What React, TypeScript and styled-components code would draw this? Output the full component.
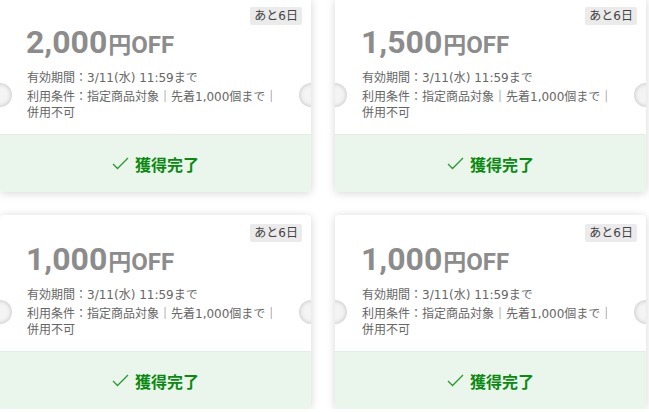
import React from "react";
import styled, { createGlobalStyle } from "styled-components";

const Global = createGlobalStyle`
  html, body { margin: 0; padding: 0; background: #ffffff; }
  body { font-family: Roboto, "Noto Sans CJK JP", sans-serif; overflow: hidden; }
`;

const Grid = styled.div`
  display: grid;
  grid-template-columns: 311px 311px;
  column-gap: 24px;
  row-gap: 23px;
  margin-top: -2px;
`;

const Card = styled.div`
  position: relative;
  height: 194px;
  background: #fff;
  border-radius: 4px;
  box-shadow: 0 1px 8px rgba(0, 0, 0, 0.17);
  display: flex;
  flex-direction: column;
  overflow: hidden;
`;

const Notch = styled.span<{ $side: "left" | "right" }>`
  position: absolute;
  top: 50%;
  ${(p) => (p.$side === "left" ? "left: -12px;" : "right: -12px;")}
  width: 24px;
  height: 24px;
  margin-top: -12px;
  border-radius: 50%;
  background: #f4f4f4;
  box-shadow: inset 0 0 5px rgba(0, 0, 0, 0.22);
`;

const Badge = styled.span`
  position: absolute;
  top: 9px;
  right: 9px;
  padding: 1px 4px;
  background: #ebebeb;
  color: #444;
  font-family: "DejaVu Sans", "Noto Sans CJK JP", sans-serif;
  font-size: 12px;
  line-height: 16px;
  border-radius: 2px;
`;

const Body = styled.div`
  flex: 1;
  padding: 24px 28px 0 27px;
`;

const Amount = styled.div`
  display: flex;
  align-items: baseline;
  color: #8c8c8c;
  line-height: 40px;
  height: 40px;
`;

const Number = styled.span`
  font-family: Roboto, sans-serif;
  font-weight: 700;
  font-size: 32px;
  margin-left: -1px;
`;

const Unit = styled.span`
  font-family: "Noto Sans CJK JP", sans-serif;
  font-weight: 700;
  font-size: 23px;
  margin-left: 1px;
`;

const Off = styled.span`
  font-family: Roboto, sans-serif;
  font-weight: 700;
  font-size: 24px;
`;

const Info = styled.p`
  margin: 0;
  color: #666;
  font-family: "DejaVu Sans", "Noto Sans CJK JP", sans-serif;
  font-size: 12px;
  line-height: 16px;
  & + & { margin-top: 3px; }
`;

const Details = styled.div`
  margin-top: 8px;
`;

const Footer = styled.div`
  height: 57px;
  flex-shrink: 0;
  background: #eaf5ec;
  border-top: 1px solid #e3ede5;
  display: flex;
  align-items: center;
  justify-content: center;
  gap: 6px;
  color: #0b8a12;
`;

const Done = styled.span`
  font-family: "Noto Sans CJK JP", sans-serif;
  font-weight: 700;
  font-size: 16px;
  line-height: 20px;
`;

const Check = () => (
  <svg width="17" height="13" viewBox="0 0 17 13" fill="none">
    <path d="M1 7 L5.5 11.5 L16 1" stroke="#2a9a30" strokeWidth="1.3" />
  </svg>
);

const coupons = ["2,000", "1,500", "1,000", "1,000"];

export default function App() {
  return (
    <>
      <Global />
      <Grid>
        {coupons.map((c, i) => (
          <Card key={i}>
            <Notch $side="left" />
            <Notch $side="right" />
            <Badge>あと6日</Badge>
            <Body>
              <Amount>
                <Number>{c}</Number>
                <Unit>円</Unit>
                <Off>OFF</Off>
              </Amount>
              <Details>
                <Info>有効期間：3/11(水) 11:59まで</Info>
                <Info>利用条件：指定商品対象｜先着1,000個まで｜併用不可</Info>
              </Details>
            </Body>
            <Footer>
              <Check />
              <Done>獲得完了</Done>
            </Footer>
          </Card>
        ))}
      </Grid>
    </>
  );
}
